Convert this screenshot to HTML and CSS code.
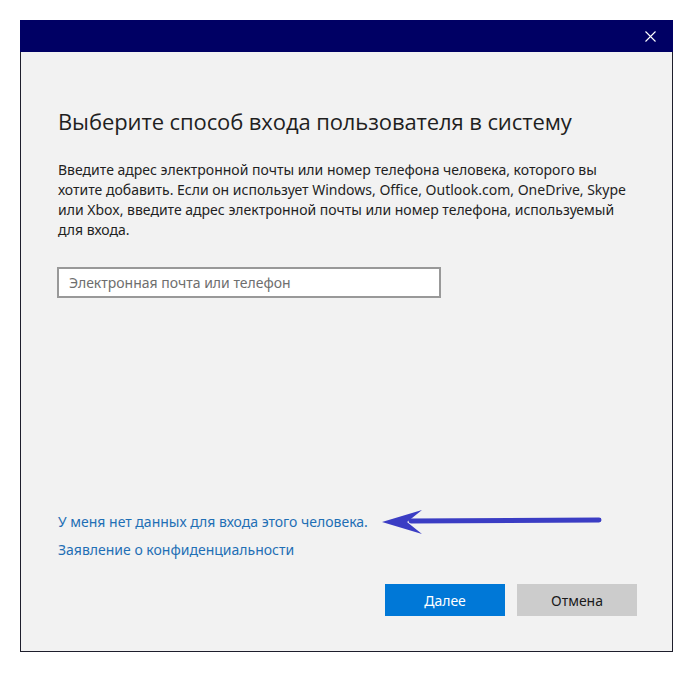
FILE: index.html
```html
<!DOCTYPE html>
<html lang="ru">
<head>
    <meta charset="UTF-8">
    <meta name="viewport" content="width=device-width, initial-scale=1.0">
    <title>Добавить пользователя</title>
    <link rel="stylesheet" href="styles.css">
</head>
<body>
    <div class="window">
        <div class="titlebar">
            <button class="close-btn" aria-label="Закрыть">
                <svg width="11" height="11" viewBox="0 0 11 11">
                    <path d="M0.5 0.5 L10.5 10.5 M10.5 0.5 L0.5 10.5" stroke="#ffffff" stroke-width="1.1" fill="none"/>
                </svg>
            </button>
        </div>

        <div class="content">
            <h1 class="title">Выберите способ входа пользователя в систему</h1>
            <p class="description">
                Введите адрес электронной почты или номер телефона человека, которого вы
                хотите добавить. Если он использует Windows, Office, Outlook.com, OneDrive, Skype
                или Xbox, введите адрес электронной почты или номер телефона, используемый
                для входа.
            </p>

            <input type="text" class="email-input" placeholder="Электронная почта или телефон">

            <div class="links">
                <a href="#">У меня нет данных для входа этого человека.</a>
                <a href="#">Заявление о конфиденциальности</a>
            </div>

            <div class="actions">
                <button class="btn btn-primary">Далее</button>
                <button class="btn btn-secondary">Отмена</button>
            </div>
        </div>

        <!-- annotation arrow drawn over the dialog -->
        <svg class="pointer-arrow" width="222" height="28" viewBox="0 0 222 28">
            <line x1="30" y1="13" x2="218" y2="12" stroke="#3b3dc4" stroke-width="5" stroke-linecap="round"/>
            <path d="M1 14 L41 2 L26 14 L41 26 Z" fill="#3b3dc4"/>
        </svg>
    </div>
</body>
</html>
```

FILE: styles.css
```css
* {
    margin: 0;
    padding: 0;
    box-sizing: border-box;
}

body {
    font-family: "Noto Sans", "Open Sans", sans-serif;
    background: #ffffff;
    color: #1a1a1a;
}

.window {
    position: relative;
    margin: 20px 0 0 20px;
    width: 653px;
    height: 632px;
    border: 1px solid #1e1e2c;
    border-top: none;
    background: #f2f2f2;
    display: flex;
    flex-direction: column;
}

.titlebar {
    height: 32px;
    background: #000064;
    display: flex;
    justify-content: flex-end;
    align-items: center;
    margin: 0 -1px;
}

.close-btn {
    width: 46px;
    height: 32px;
    background: none;
    border: none;
    display: flex;
    align-items: center;
    justify-content: center;
}

.content {
    flex: 1;
    display: flex;
    flex-direction: column;
    padding: 54px 35px 35px 37px;
}

.title {
    font-family: "Open Sans", "Noto Sans", sans-serif;
    font-size: 22px;
    font-weight: 400;
    color: #1f1f1f;
    line-height: 30px;
    margin-bottom: 24px;
    letter-spacing: -0.1px;
}

.description {
    font-size: 14px;
    line-height: 20px;
    color: #1f1f1f;
    margin-bottom: 27px;
}

.email-input {
    width: 384px;
    height: 31px;
    margin-left: -1px;
    border: 2px solid #999999;
    background: #ffffff;
    padding: 0 10px;
    font-family: inherit;
    font-size: 14px;
    color: #1a1a1a;
    outline: none;
}

.email-input::placeholder {
    color: #6e6e6e;
}

.links {
    margin-top: auto;
    display: flex;
    flex-direction: column;
    align-items: flex-start;
    gap: 8px;
}

.links a {
    color: #1f6fb5;
    text-decoration: none;
    font-size: 14px;
    line-height: 20px;
}

.actions {
    display: flex;
    justify-content: flex-end;
    gap: 12px;
    margin-top: 24px;
}

.btn {
    width: 120px;
    height: 32px;
    border: none;
    font-family: inherit;
    font-size: 14px;
}

.btn-primary {
    background: #0078d7;
    color: #ffffff;
}

.btn-secondary {
    background: #cccccc;
    color: #1a1a1a;
}

.pointer-arrow {
    position: absolute;
    left: 360px;
    top: 488px;
}
```
